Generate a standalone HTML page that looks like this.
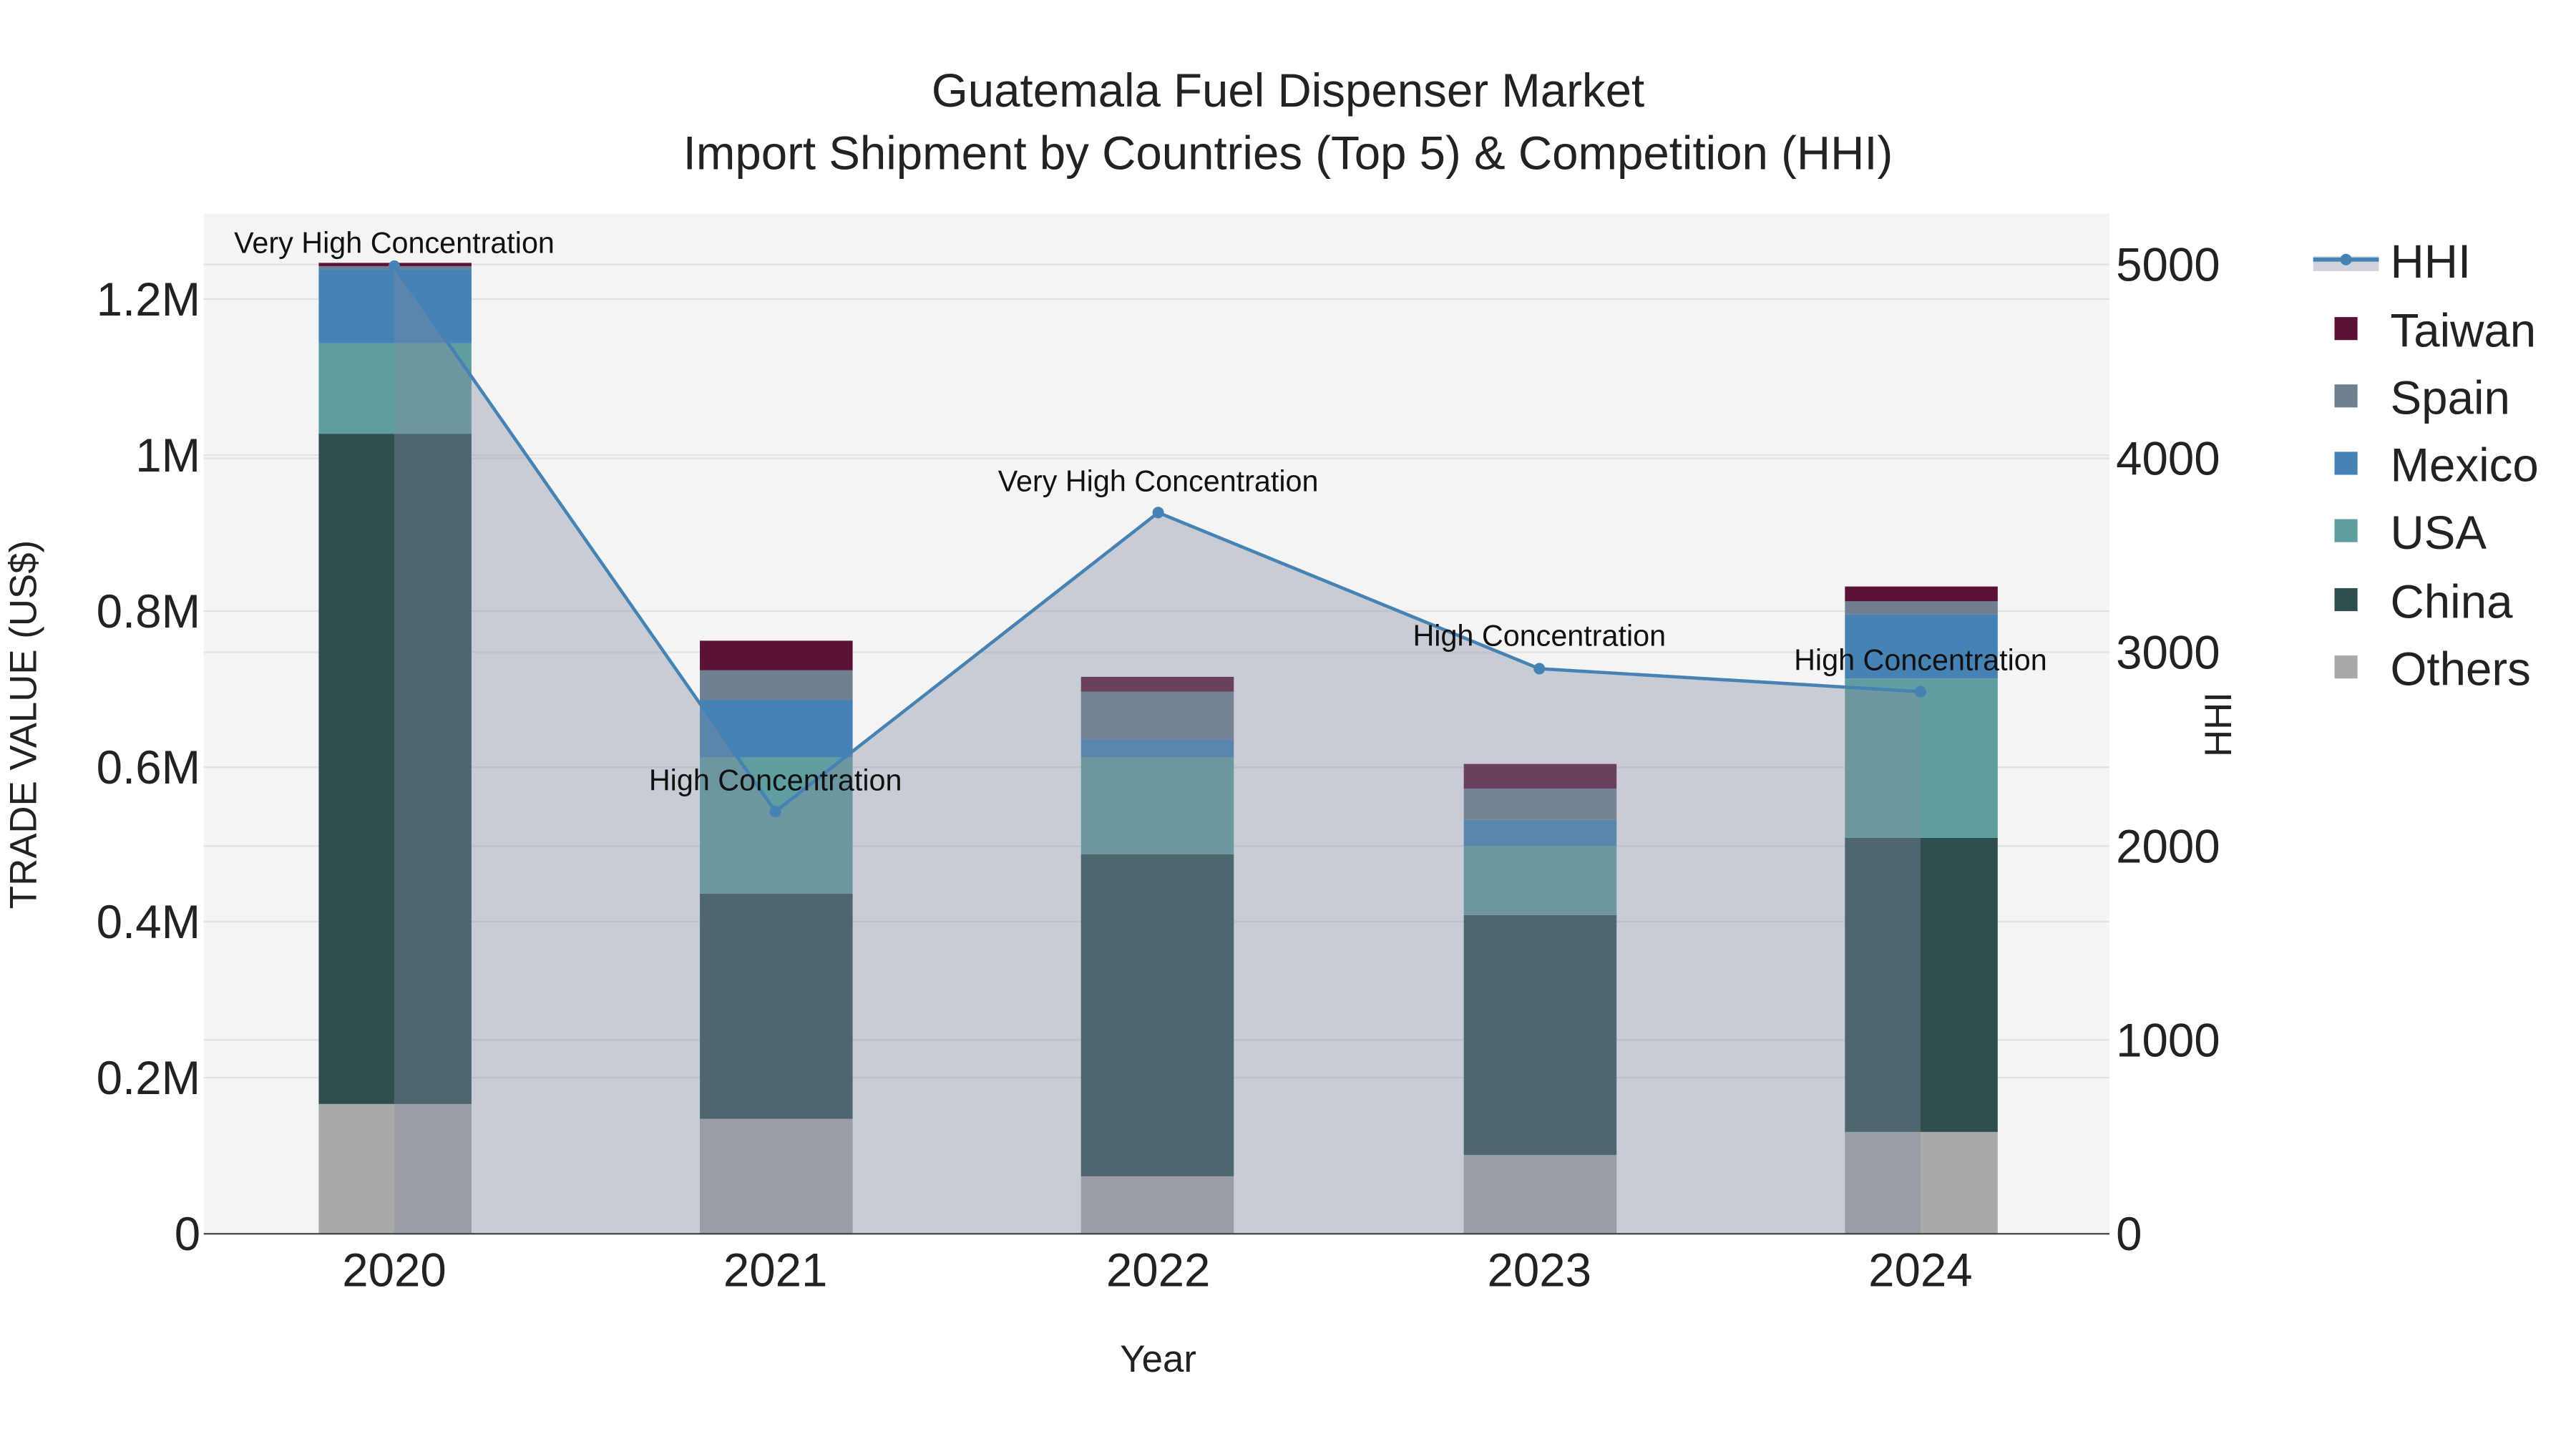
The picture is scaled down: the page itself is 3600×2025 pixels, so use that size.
<!DOCTYPE html>
<html><head><meta charset="utf-8"><style>
html,body{margin:0;padding:0;background:#fff;}
svg{display:block;}
text{font-family:"Liberation Sans",sans-serif;}
</style></head><body>
<svg width="3600" height="2025" viewBox="0 0 1568 882" preserveAspectRatio="none" xmlns="http://www.w3.org/2000/svg">
<rect x="0" y="0" width="1568" height="882" fill="#fff"/>
<rect x="124" y="130" width="1160" height="621" fill="#f4f4f4"/>
<g stroke="#e2e2e2" stroke-width="1">
<line x1="124" x2="1284" y1="656" y2="656"/><line x1="124" x2="1284" y1="561" y2="561"/>
<line x1="124" x2="1284" y1="467" y2="467"/><line x1="124" x2="1284" y1="372" y2="372"/>
<line x1="124" x2="1284" y1="277" y2="277"/><line x1="124" x2="1284" y1="182" y2="182"/>
<line x1="124" x2="1284" y1="633" y2="633"/><line x1="124" x2="1284" y1="515" y2="515"/>
<line x1="124" x2="1284" y1="397" y2="397"/><line x1="124" x2="1284" y1="279" y2="279"/>
<line x1="124" x2="1284" y1="161" y2="161"/>
</g>
<g>
<rect x="194" y="672" width="93" height="79" fill="#a9a9a9"/><rect x="194" y="264" width="93" height="408" fill="#2f4f4f"/><rect x="194" y="209" width="93" height="55" fill="#5f9ea0"/><rect x="194" y="164" width="93" height="45" fill="#4682b4"/><rect x="194" y="162" width="93" height="2" fill="#6e7f8f"/><rect x="194" y="160" width="93" height="2" fill="#5c1235"/>
<rect x="426" y="681" width="93" height="70" fill="#a9a9a9"/><rect x="426" y="544" width="93" height="137" fill="#2f4f4f"/><rect x="426" y="461" width="93" height="83" fill="#5f9ea0"/><rect x="426" y="426" width="93" height="35" fill="#4682b4"/><rect x="426" y="408" width="93" height="18" fill="#6e7f8f"/><rect x="426" y="390" width="93" height="18" fill="#5c1235"/>
<rect x="658" y="716" width="93" height="35" fill="#a9a9a9"/><rect x="658" y="520" width="93" height="196" fill="#2f4f4f"/><rect x="658" y="461" width="93" height="59" fill="#5f9ea0"/><rect x="658" y="450" width="93" height="11" fill="#4682b4"/><rect x="658" y="421" width="93" height="29" fill="#6e7f8f"/><rect x="658" y="412" width="93" height="9" fill="#5c1235"/>
<rect x="891" y="703" width="93" height="48" fill="#a9a9a9"/><rect x="891" y="557" width="93" height="146" fill="#2f4f4f"/><rect x="891" y="515" width="93" height="42" fill="#5f9ea0"/><rect x="891" y="499" width="93" height="16" fill="#4682b4"/><rect x="891" y="480" width="93" height="19" fill="#6e7f8f"/><rect x="891" y="465" width="93" height="15" fill="#5c1235"/>
<rect x="1123" y="689" width="93" height="62" fill="#a9a9a9"/><rect x="1123" y="510" width="93" height="179" fill="#2f4f4f"/><rect x="1123" y="413" width="93" height="97" fill="#5f9ea0"/><rect x="1123" y="374" width="93" height="39" fill="#4682b4"/><rect x="1123" y="366" width="93" height="8" fill="#6e7f8f"/><rect x="1123" y="357" width="93" height="9" fill="#5c1235"/>
</g>
<polygon points="240,162 472,494 705,312 937,407 1169,421 1169,751 240,751" fill="rgba(128,139,160,0.38)"/>
<line x1="124" x2="1284" y1="751" y2="751" stroke="#444" stroke-width="1"/>
<polyline points="240,162 472,494 705,312 937,407 1169,421" fill="none" stroke="#4682b4" stroke-width="2"/>
<g fill="#4682b4"><circle cx="240" cy="162" r="3.5"/><circle cx="472" cy="494" r="3.5"/><circle cx="705" cy="312" r="3.5"/><circle cx="937" cy="407" r="3.5"/><circle cx="1169" cy="421" r="3.5"/></g>
<g font-size="18" fill="#111" text-anchor="middle">
<text x="240" y="154">Very High Concentration</text>
<text x="472" y="481">High Concentration</text>
<text x="705" y="299">Very High Concentration</text>
<text x="937" y="393">High Concentration</text>
<text x="1169" y="408">High Concentration</text>
</g>
<g font-size="28.5" fill="#222" text-anchor="middle">
<text x="784" y="65">Guatemala Fuel Dispenser Market</text>
<text x="784" y="103">Import Shipment by Countries (Top 5) &amp; Competition (HHI)</text>
</g>
<g font-size="28.5" fill="#222" text-anchor="end">
<text x="122" y="761">0</text><text x="122" y="666">0.2M</text><text x="122" y="571">0.4M</text>
<text x="122" y="477">0.6M</text><text x="122" y="382">0.8M</text><text x="122" y="287">1M</text><text x="122" y="192">1.2M</text>
</g>
<g font-size="28.5" fill="#222">
<text x="1288" y="761">0</text><text x="1288" y="643">1000</text><text x="1288" y="525">2000</text>
<text x="1288" y="407">3000</text><text x="1288" y="289">4000</text><text x="1288" y="171">5000</text>
</g>
<g font-size="28.5" fill="#222" text-anchor="middle">
<text x="240" y="783">2020</text><text x="472" y="783">2021</text><text x="705" y="783">2022</text><text x="937" y="783">2023</text><text x="1169" y="783">2024</text>
</g>
<text x="705" y="835" font-size="23" fill="#222" text-anchor="middle">Year</text>
<text transform="translate(22,441) rotate(-90)" font-size="23" fill="#222" text-anchor="middle">TRADE VALUE (US$)</text>
<text transform="translate(1358,441) rotate(-90)" font-size="23" fill="#222" text-anchor="middle">HHI</text>
<rect x="1408" y="156" width="40" height="9" fill="rgba(128,139,160,0.38)"/>
<line x1="1408" x2="1448" y1="158" y2="158" stroke="#4682b4" stroke-width="2.5"/>
<circle cx="1428" cy="158" r="3.5" fill="#4682b4"/>
<rect x="1421" y="193" width="14" height="14" fill="#5c1235"/>
<rect x="1421" y="234" width="14" height="14" fill="#6e7f8f"/>
<rect x="1421" y="275" width="14" height="14" fill="#4682b4"/>
<rect x="1421" y="316" width="14" height="14" fill="#5f9ea0"/>
<rect x="1421" y="358" width="14" height="14" fill="#2f4f4f"/>
<rect x="1421" y="399" width="14" height="14" fill="#a9a9a9"/>
<g font-size="28.5" fill="#222">
<text x="1455" y="169">HHI</text><text x="1455" y="211">Taiwan</text><text x="1455" y="252">Spain</text>
<text x="1455" y="293">Mexico</text><text x="1455" y="334">USA</text><text x="1455" y="376">China</text><text x="1455" y="417">Others</text>
</g>
</svg>
</body></html>
